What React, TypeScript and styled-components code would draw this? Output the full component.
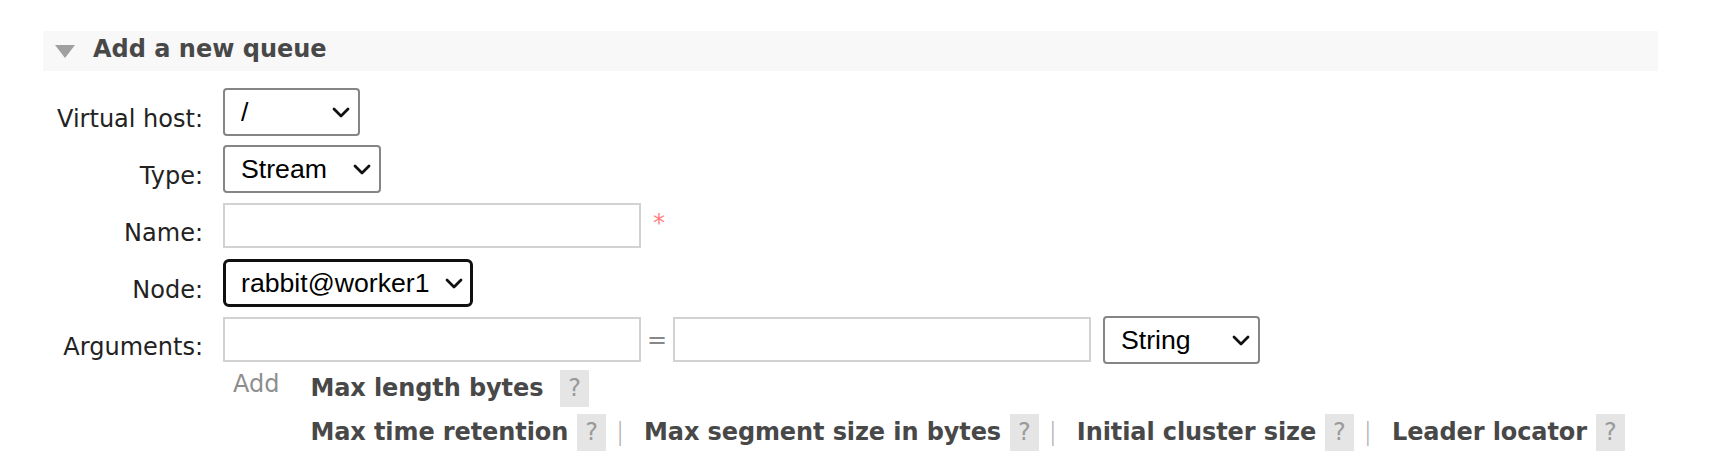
import styled, { createGlobalStyle } from "styled-components";

const GlobalStyle = createGlobalStyle`
    html, body {
        margin: 0;
        padding: 0;
        background: #ffffff;
    }
    body {
        font-family: "DejaVu Sans", Verdana, sans-serif;
        font-size: 24px;
        color: #222222;
    }
`;

const Page = styled.div`
    padding: 31px 0 0 43px;
`;

const Section = styled.section`
    width: 1615px;
`;

const SectionHeader = styled.div`
    display: flex;
    align-items: center;
    height: 40px;
    padding-left: 12px;
    background-color: #f8f8f8;
    box-sizing: border-box;
`;

const Toggle = styled.svg`
    width: 20px;
    height: 13px;
    margin-right: 18px;
    fill: #a0a0a0;
`;

const Title = styled.h2`
    margin: -4px 0 0;
    font-size: 24px;
    line-height: 28px;
    font-weight: 700;
    color: #484848;
`;

const Form = styled.div`
    margin-top: 12px;
`;

const FormRow = styled.div<{ $auto?: boolean }>`
    display: grid;
    grid-template-columns: 160px 1fr;
    column-gap: 20px;
    align-items: center;
    height: ${({ $auto }) => ($auto ? "auto" : "57px")};
`;

const Label = styled.label`
    text-align: right;
    padding-top: 14px;
    line-height: 28px;
    color: #222222;
    white-space: nowrap;
`;

const Cell = styled.div`
    display: flex;
    align-items: center;
    gap: 6px;
`;

const SelectWrap = styled.div<{ $width: number; $focused?: boolean; $offset?: number }>`
    position: relative;
    width: ${({ $width }) => $width}px;
    height: 48px;
    margin-left: ${({ $offset }) => $offset ?? 0}px;
    flex: none;

    select {
        appearance: none;
        width: 100%;
        height: 100%;
        box-sizing: border-box;
        margin: 0;
        padding: 0 30px 0 ${({ $focused }) => ($focused ? 15 : 16)}px;
        font-family: "Liberation Sans", Arial, sans-serif;
        font-size: 26.67px;
        color: #000000;
        background: #ffffff;
        border: ${({ $focused }) => ($focused ? "3px solid #101010" : "2px solid #858585")};
        border-radius: ${({ $focused }) => ($focused ? 6 : 4)}px;
        outline: none;
    }
`;

const Chevron = styled.svg`
    position: absolute;
    right: 10px;
    top: 50%;
    width: 18px;
    height: 11px;
    margin-top: -5px;
    pointer-events: none;
`;

const TextInput = styled.input`
    width: 418px;
    height: 45px;
    box-sizing: border-box;
    margin: 0;
    padding: 0 6px;
    border: 2px solid #d2d2d2;
    border-radius: 0;
    font-family: "DejaVu Sans", Verdana, sans-serif;
    font-size: 24px;
    background: #ffffff;
    flex: none;
`;

const Required = styled.span`
    margin-left: 6px;
    color: #ff7f7f;
    font-size: 24px;
    line-height: 28px;
    margin-top: -6px;
`;

const Equals = styled.span`
    width: 20px;
    text-align: center;
    color: #888888;
    line-height: 28px;
`;

const Extras = styled.div`
    grid-column: 2;
    display: flex;
    align-items: flex-start;
    margin-top: -2px;
`;

const AddLink = styled.span`
    margin: 4px 0 0 10px;
    line-height: 28px;
    color: #8e8e8e;
`;

const Links = styled.div`
    margin-left: 31px;
`;

const LinkLine = styled.div`
    display: flex;
    align-items: center;
    height: 44px;
    white-space: nowrap;
`;

const ArgLink = styled.span`
    font-weight: 700;
    letter-spacing: -0.1px;
    line-height: 28px;
    color: #484848;
`;

const Help = styled.span<{ $gap?: number }>`
    display: inline-block;
    margin-left: ${({ $gap }) => $gap ?? 9}px;
    padding: 4px 8px 5px;
    line-height: 28px;
    background-color: #e5e5e5;
    color: #9a9a9a;
`;

const Separator = styled.span`
    margin: 0 20px 0 10px;
    line-height: 28px;
    font-weight: 300;
    color: #a6a6a6;
`;

const Select = ({ value, width, focused, offset }: { value: string; width: number; focused?: boolean; offset?: number }) => (
    <SelectWrap $width={width} $focused={focused} $offset={offset}>
        <select defaultValue={value}>
            <option value={value}>{value}</option>
        </select>
        <Chevron viewBox="0 0 18 11">
            <path d="M2 2 L9 9 L16 2" fill="none" stroke="#111" strokeWidth="2.8" strokeLinecap="round" strokeLinejoin="round" />
        </Chevron>
    </SelectWrap>
);

const lineTwo = ["Max time retention", "Max segment size in bytes", "Initial cluster size", "Leader locator"];

export default function App() {
    return (
        <>
            <GlobalStyle />
            <Page>
                <Section>
                    <SectionHeader>
                        <Toggle viewBox="0 0 20 13">
                            <polygon points="0,0 20,0 10,13" />
                        </Toggle>
                        <Title>Add a new queue</Title>
                    </SectionHeader>
                    <Form>
                        <FormRow>
                            <Label>Virtual host:</Label>
                            <Cell>
                                <Select value="/" width={137} />
                            </Cell>
                        </FormRow>
                        <FormRow>
                            <Label>Type:</Label>
                            <Cell>
                                <Select value="Stream" width={158} />
                            </Cell>
                        </FormRow>
                        <FormRow>
                            <Label>Name:</Label>
                            <Cell>
                                <TextInput type="text" />
                                <Required>*</Required>
                            </Cell>
                        </FormRow>
                        <FormRow>
                            <Label>Node:</Label>
                            <Cell>
                                <Select value="rabbit@worker1" width={250} focused />
                            </Cell>
                        </FormRow>
                        <FormRow>
                            <Label>Arguments:</Label>
                            <Cell>
                                <TextInput type="text" />
                                <Equals>=</Equals>
                                <TextInput type="text" />
                                <Select value="String" width={157} offset={6} />
                            </Cell>
                        </FormRow>
                        <FormRow $auto>
                            <span />
                            <Extras>
                                <AddLink>Add</AddLink>
                                <Links>
                                    <LinkLine>
                                        <ArgLink>Max length bytes</ArgLink>
                                        <Help $gap={17}>?</Help>
                                    </LinkLine>
                                    <LinkLine>
                                        {lineTwo.map((name, i) => (
                                            <span key={name} style={{ display: "contents" }}>
                                                {i > 0 && <Separator>|</Separator>}
                                                <ArgLink>{name}</ArgLink>
                                                <Help>?</Help>
                                            </span>
                                        ))}
                                    </LinkLine>
                                </Links>
                            </Extras>
                        </FormRow>
                    </Form>
                </Section>
            </Page>
        </>
    );
}
